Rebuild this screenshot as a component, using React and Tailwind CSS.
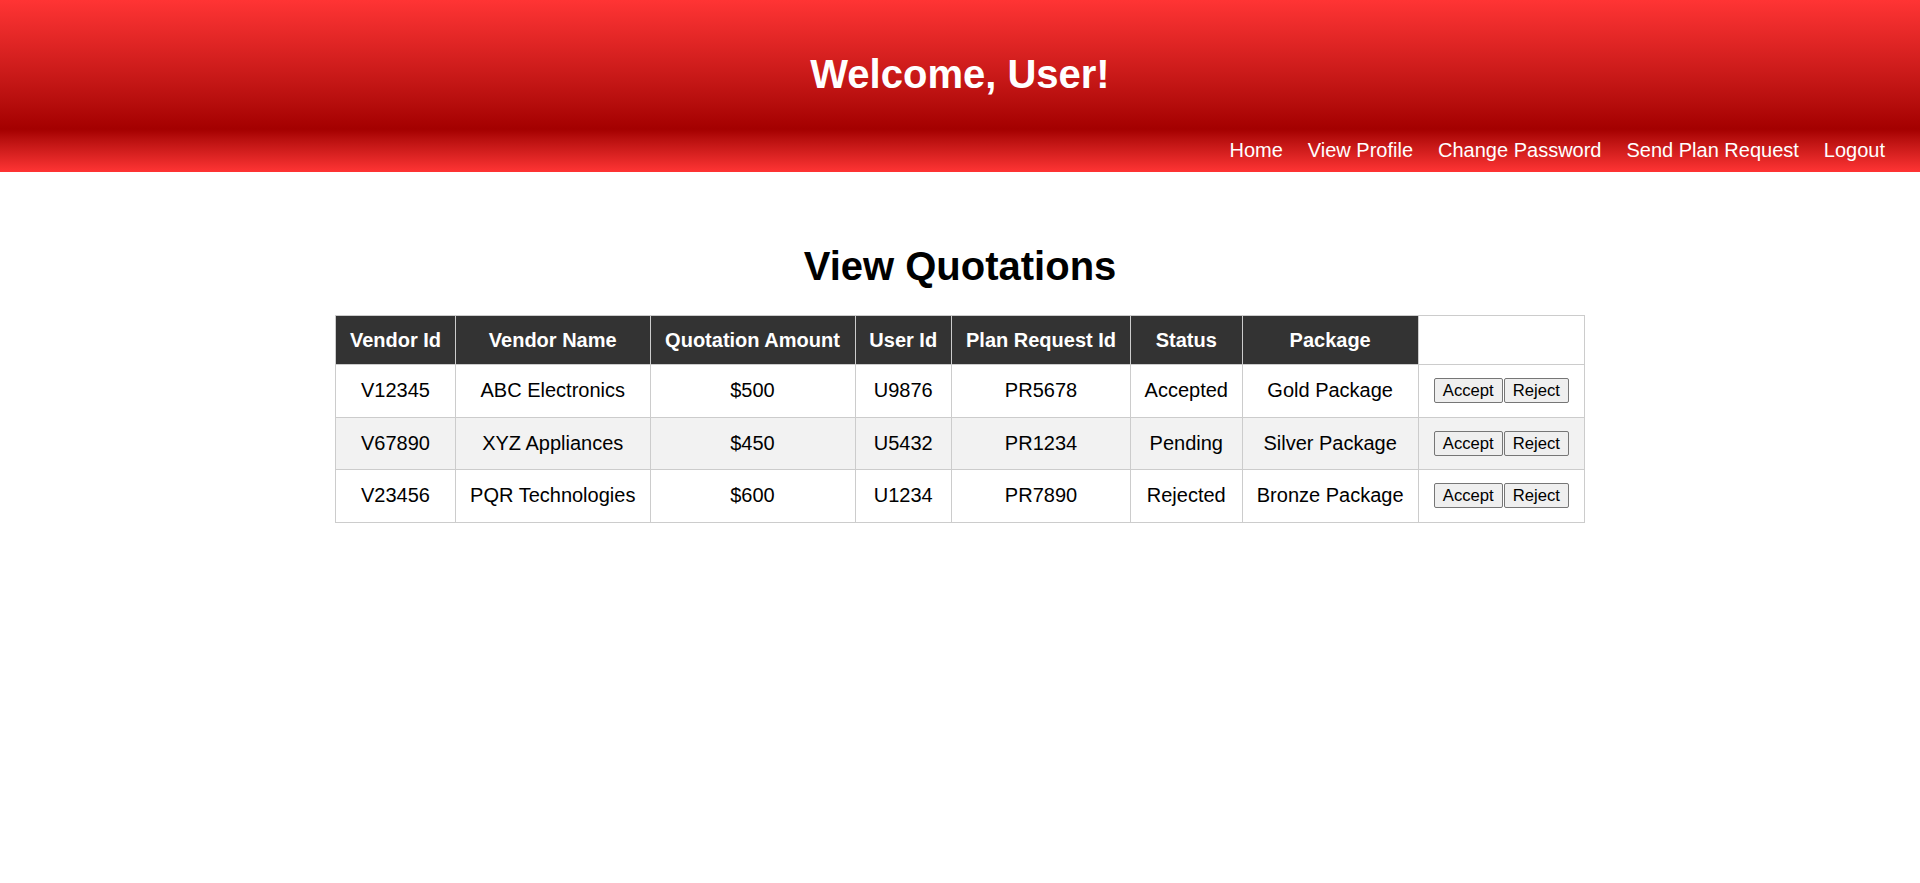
import React from 'react'

const font = { fontFamily: '"Liberation Sans", Arial, sans-serif' }

const quotations = [
  { vendorId: 'V12345', vendorName: 'ABC Electronics', amount: '$500', userId: 'U9876', planId: 'PR5678', status: 'Accepted', pkg: 'Gold Package' },
  { vendorId: 'V67890', vendorName: 'XYZ Appliances', amount: '$450', userId: 'U5432', planId: 'PR1234', status: 'Pending', pkg: 'Silver Package' },
  { vendorId: 'V23456', vendorName: 'PQR Technologies', amount: '$600', userId: 'U1234', planId: 'PR7890', status: 'Rejected', pkg: 'Bronze Package' },
]

const headings = ['Vendor Id', 'Vendor Name', 'Quotation Amount', 'User Id', 'Plan Request Id', 'Status', 'Package']
const navLinks = ['Home', 'View Profile', 'Change Password', 'Send Plan Request', 'Logout']

function ActionButton({ children, className = '' }) {
  return (
    <button
      className={`inline-flex items-center h-[25px] px-[8px] bg-[#efefef] border border-[#767676] rounded-[2px] text-[16.67px] leading-[19px] text-black hover:bg-[#e5e5e5] ${className}`}
    >
      {children}
    </button>
  )
}

export default function App() {
  return (
    <div className="min-h-screen bg-white text-black" style={font}>
      {/* header */}
      <header>
        <div className="h-[129px] pt-[51px] bg-linear-to-b from-[#ff3434] to-[#a40000]">
          <h1 className="text-center text-white font-bold text-[40px] leading-[46px]">Welcome, User!</h1>
        </div>
        <nav className="h-[43px] flex items-center justify-end gap-[25px] pr-[35px] bg-linear-to-b from-[#a40000] to-[#ff3434]">
          {navLinks.map((link) => (
            <a key={link} href="#" className="text-white text-[20px] leading-[23px] hover:underline">
              {link}
            </a>
          ))}
        </nav>
      </header>

      <main>
        <h2 className="mt-[71px] text-center font-bold text-[40px] leading-[46px]">View Quotations</h2>

        <table className="mt-[26px] mx-auto w-[1249px] table-fixed border-collapse border border-[#cccccc] text-[20px] leading-[23px]">
          <colgroup>
            <col className="w-[120px]" />
            <col className="w-[194.5px]" />
            <col className="w-[205px]" />
            <col className="w-[96.5px]" />
            <col className="w-[179px]" />
            <col className="w-[111.5px]" />
            <col className="w-[176.3px]" />
            <col className="w-[166.2px]" />
          </colgroup>
          <thead>
            <tr className="h-[49px]">
              {headings.map((h) => (
                <th key={h} className="bg-[#333333] text-white font-bold p-0 border border-[#cccccc] text-center whitespace-nowrap">
                  {h}
                </th>
              ))}
              <th className="bg-white border border-[#cccccc]"></th>
            </tr>
          </thead>
          <tbody>
            {quotations.map((q, i) => (
              <tr key={q.vendorId} className={`h-[52.5px] ${i % 2 === 1 ? 'bg-[#f2f2f2]' : 'bg-white'}`}>
                <td className="border border-[#cccccc] text-center">{q.vendorId}</td>
                <td className="border border-[#cccccc] text-center whitespace-nowrap">{q.vendorName}</td>
                <td className="border border-[#cccccc] text-center">{q.amount}</td>
                <td className="border border-[#cccccc] text-center">{q.userId}</td>
                <td className="border border-[#cccccc] text-center">{q.planId}</td>
                <td className="border border-[#cccccc] text-center">{q.status}</td>
                <td className="border border-[#cccccc] text-center whitespace-nowrap">{q.pkg}</td>
                <td className="border border-[#cccccc] text-center whitespace-nowrap">
                  <ActionButton>Accept</ActionButton>
                  <ActionButton className="ml-[1px]">Reject</ActionButton>
                </td>
              </tr>
            ))}
          </tbody>
        </table>
      </main>
    </div>
  )
}
